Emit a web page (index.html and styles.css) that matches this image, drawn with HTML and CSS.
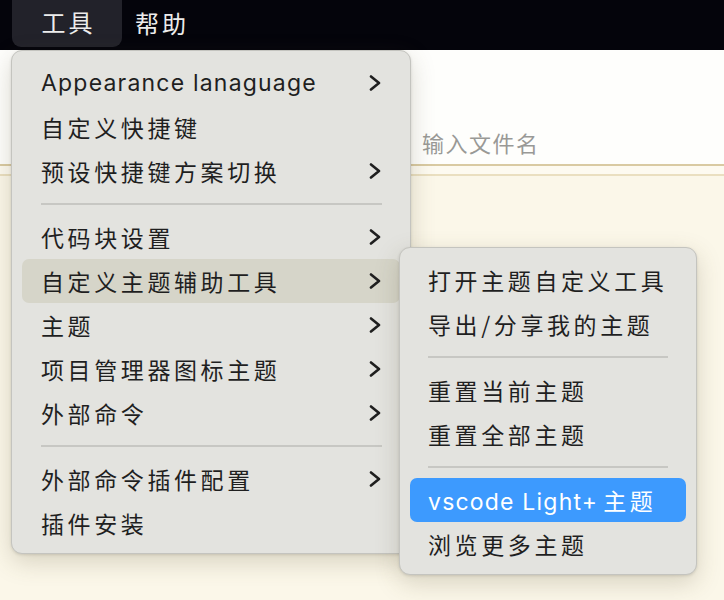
FILE: index.html
```html
<!DOCTYPE html>
<html lang="zh">
<head>
<meta charset="utf-8">
<link rel="stylesheet" href="styles.css">
</head>
<body>
<div class="menubar">
  <div class="mb-item active">工具</div>
  <div class="mb-item">帮助</div>
</div>
<div class="app">
  <div class="top-area">
    <div class="filename">输入文件名</div>
  </div>
  <div class="rule"></div>
  <div class="content"></div>
</div>

<div class="menu main-menu">
  <div class="item"><span class="label latin">Appearance lanaguage</span><svg class="chev" viewBox="0 0 12 16"><path d="M2 1.5 L10 8 L2 14.5"/></svg></div>
  <div class="item"><span class="label">自定义快捷键</span></div>
  <div class="item"><span class="label">预设快捷键方案切换</span><svg class="chev" viewBox="0 0 12 16"><path d="M2 1.5 L10 8 L2 14.5"/></svg></div>
  <div class="sep"></div>
  <div class="item"><span class="label">代码块设置</span><svg class="chev" viewBox="0 0 12 16"><path d="M2 1.5 L10 8 L2 14.5"/></svg></div>
  <div class="item hover"><span class="label">自定义主题辅助工具</span><svg class="chev" viewBox="0 0 12 16"><path d="M2 1.5 L10 8 L2 14.5"/></svg></div>
  <div class="item"><span class="label">主题</span><svg class="chev" viewBox="0 0 12 16"><path d="M2 1.5 L10 8 L2 14.5"/></svg></div>
  <div class="item"><span class="label">项目管理器图标主题</span><svg class="chev" viewBox="0 0 12 16"><path d="M2 1.5 L10 8 L2 14.5"/></svg></div>
  <div class="item"><span class="label">外部命令</span><svg class="chev" viewBox="0 0 12 16"><path d="M2 1.5 L10 8 L2 14.5"/></svg></div>
  <div class="sep"></div>
  <div class="item"><span class="label">外部命令插件配置</span><svg class="chev" viewBox="0 0 12 16"><path d="M2 1.5 L10 8 L2 14.5"/></svg></div>
  <div class="item"><span class="label">插件安装</span></div>
</div>

<div class="menu sub-menu">
  <div class="item"><span class="label">打开主题自定义工具</span></div>
  <div class="item"><span class="label">导出/分享我的主题</span></div>
  <div class="sep"></div>
  <div class="item"><span class="label">重置当前主题</span></div>
  <div class="item"><span class="label">重置全部主题</span></div>
  <div class="sep"></div>
  <div class="item selected"><span class="label"><span class="latin">vscode Light+</span><span class="gap">主题</span></span></div>
  <div class="item"><span class="label">浏览更多主题</span></div>
</div>
</body>
</html>
```

FILE: styles.css
```css
html, body {
  margin: 0;
  padding: 0;
  width: 724px;
  height: 600px;
  overflow: hidden;
  font-family: "Inter", "Noto Sans CJK SC", sans-serif;
  background: #fbf7e9;
}

.menubar {
  height: 50px;
  background: #04040b;
  display: flex;
  align-items: stretch;
  padding-left: 12px;
}

.mb-item {
  color: #ececec;
  font-size: 24px;
  letter-spacing: 3px;
  display: flex;
  align-items: center;
  padding: 0 13px 5px;
  font-family: "Noto Sans CJK SC", sans-serif;
}

.mb-item.active {
  background: #22222a;
  border-radius: 0 0 9px 9px;
  width: 110px;
  height: 47px;
  box-sizing: border-box;
  justify-content: center;
  padding: 0 0 5px 3px;
}

.app {
  display: flex;
  flex-direction: column;
}

.top-area {
  height: 114px;
  background: #fefefc;
  box-sizing: border-box;
  padding: 78px 0 0 422px;
}

.filename {
  font-family: "Noto Sans CJK SC", sans-serif;
  font-size: 22px;
  color: #999996;
  letter-spacing: 1.5px;
  line-height: 28px;
}

.rule {
  height: 8px;
  border-top: 2px solid #d9caa2;
  border-bottom: 2px solid #eadfc0;
  background: #fdfaf0;
}

.content {
  flex: 1;
}

.menu {
  position: absolute;
  background: #e3e3df;
  border: 1px solid #c4c4bf;
  border-radius: 11px;
  box-shadow: 0 8px 24px rgba(90, 80, 50, 0.22), 0 1px 3px rgba(0,0,0,0.12);
  box-sizing: border-box;
  padding: 10px 10px 8px;
  color: #1f1f1f;
}

.main-menu {
  left: 11px;
  top: 50px;
  width: 400px;
}

.sub-menu {
  left: 399px;
  top: 247px;
  width: 298px;
}

.item {
  height: 44px;
  display: flex;
  align-items: center;
  justify-content: space-between;
  padding: 0 19px 0 19px;
  border-radius: 7px;
}

.sub-menu .item {
  padding-left: 18px;
}

.label {
  font-size: 23px;
  letter-spacing: 3.6px;
  white-space: nowrap;
  font-family: "Noto Sans CJK SC", sans-serif;
}

.label.latin, .latin {
  font-family: "Inter", "Noto Sans CJK SC", sans-serif;
  letter-spacing: 1.2px;
}

.gap {
  margin-left: 5px;
}

.item.hover {
  background: #d6d5c9;
}

.item.selected {
  background: #3d9afe;
  color: #ffffff;
}

.chev {
  width: 12px;
  height: 16px;
  fill: none;
  stroke: #1f1f1f;
  stroke-width: 2.6;
  stroke-linecap: round;
  stroke-linejoin: round;
}

.sep {
  height: 2px;
  background: #c7c7c3;
  margin: 10px 18px 10px 19px;
}

.sub-menu .sep {
  margin: 10px 18px 10px 18px;
}
```
